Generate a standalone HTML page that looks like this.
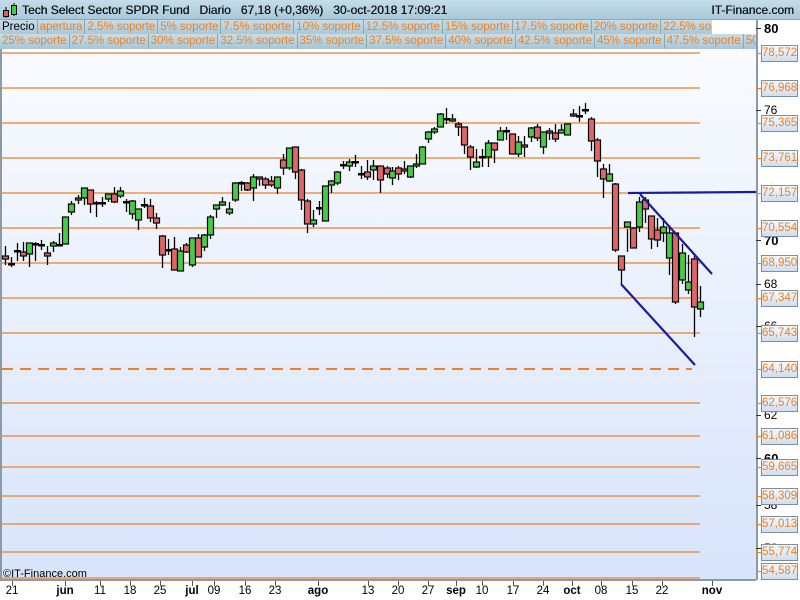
<!DOCTYPE html>
<html><head><meta charset="utf-8"><style>
*{margin:0;padding:0;box-sizing:border-box}
body{width:800px;height:600px;overflow:hidden;background:#fff;font-family:"Liberation Sans",sans-serif;position:relative}
#top{position:absolute;left:0;top:0;width:800px;height:20px;background:linear-gradient(#c4dde9,#a9cadb);border-bottom:1px solid #8aa;}
#top .t{position:absolute;left:22px;top:3px;font-size:12px;color:#111;text-shadow:0.3px 0 0 #111}
#top .r{position:absolute;right:6px;top:3px;font-size:12px;color:#111;text-shadow:0.3px 0 0 #111}
.row{position:absolute;left:0;height:15px;display:flex;white-space:nowrap;overflow:hidden}
.row span{display:block;height:15px;font-size:11.5px;line-height:14px;color:#f08020;padding:0 2px;border-right:1px solid #8aa;background:linear-gradient(#c8dde8,#a8c6d6)}
#axis{position:absolute;left:756px;top:20px;width:44px;height:560px;background:#fff;border-left:2px solid #8a9aa8}
.lb{position:absolute;left:761px;width:37px;height:17px;border:1px solid #7890a0;background:linear-gradient(#f4f8fc,#d0def0);color:#f08020;font-size:11.5px;line-height:15px;text-align:center}
.an{position:absolute;left:764px;font-size:12px;color:#000}
.xl{position:absolute;top:585px;font-size:11.5px;color:#000;transform:translateX(-50%)}
</style></head><body>
<div id="top"><svg style="position:absolute;left:2px;top:2px" width="16" height="16"><line x1="4" y1="5" x2="4" y2="16" stroke="#000"/><rect x="1.5" y="8.5" width="5" height="6" fill="#e06060" stroke="#000"/><line x1="12" y1="1" x2="12" y2="14" stroke="#000"/><rect x="9.5" y="3.5" width="5" height="9" fill="#40d040" stroke="#000"/></svg><div class="t">Tech Select Sector SPDR Fund&nbsp;&nbsp;&nbsp;Diario&nbsp;&nbsp;&nbsp;67,18 (+0,36%)&nbsp;&nbsp;&nbsp;30-oct-2018 17:09:21</div><div class="r">IT-Finance.com</div></div>
<div class="row" style="top:20px;width:712px"><span style="color:#000">Precio</span><span>apertura</span><span>2.5% soporte</span><span>5% soporte</span><span>7.5% soporte</span><span>10% soporte</span><span>12.5% soporte</span><span>15% soporte</span><span>17.5% soporte</span><span>20% soporte</span><span>22.5% soporte</span></div>
<div class="row" style="top:34px;width:756px"><span>25% soporte</span><span>27.5% soporte</span><span>30% soporte</span><span>32.5% soporte</span><span>35% soporte</span><span>37.5% soporte</span><span>40% soporte</span><span>42.5% soporte</span><span>45% soporte</span><span>47.5% soporte</span><span>50% soporte</span></div>
<svg id="ch" style="position:absolute;left:0;top:49px" width="756" height="532"></svg>
<div id="axis"></div>
<div id="al"></div>
<div style="position:absolute;left:0;top:581px;width:800px;height:19px;background:#fff"></div>
<div id="xl"></div>
<script>
var ch=document.getElementById('ch'),h='';
h+='<defs><linearGradient id="g" x1="0" y1="0" x2="0" y2="1"><stop offset="0" stop-color="#f9fbff"/><stop offset="1" stop-color="#d8e4fb"/></linearGradient></defs>';
h+='<rect x="0" y="0" width="756" height="532" fill="url(#g)"/>';
h+='<line x1="1" y1="0" x2="1" y2="532" stroke="#8a9aa8" stroke-width="2"/>';
h+='<line x1="0" y1="531" x2="756" y2="531" stroke="#8a9aa8" stroke-width="2"/>';
var lv=[53,88,123,158,193,228,263,298,333,403,436,467,496,524,552,578];
lv.forEach(function(y){h+='<line x1="2" y1="'+(y-49)+'" x2="700" y2="'+(y-49)+'" stroke="#f08020" stroke-width="1.3"/>';});
h+='<line x1="2" y1="320" x2="692" y2="320" stroke="#f08020" stroke-width="2" stroke-dasharray="11,7"/>';
var c=[[5,256,259,246,265],[11,264,265,257,267],[17,251,251,243,261],[23,252,256,242,261],[29,254,243,243,267],[35,244,244,242,261],[41,245,245,240,250],[47,253,256,246,265],[53,246,243,241,252],[59,245,245,233,245],[65,244,217,217,244],[71,212,204,201,215],[78,200,198,195,204],[84,198,188,188,205],[90,190,204,190,213],[96,203,203,201,217],[102,203,203,197,207],[108,199,194,194,202],[114,194,202,187,203],[120,196,191,187,198],[126,202,202,199,212],[132,214,201,200,219],[138,220,209,209,230],[144,205,205,198,208],[150,206,218,199,222],[156,218,223,213,229],[162,236,255,235,268],[168,250,250,239,255],[174,249,270,237,270],[180,271,251,247,271],[186,245,252,243,253],[192,265,238,238,267],[198,238,257,234,257],[204,247,235,234,251],[210,235,217,215,239],[216,209,205,205,218],[222,205,202,197,206],[229,213,209,202,215],[235,200,183,182,202],[241,183,183,181,191],[247,183,190,182,191],[253,188,177,174,201],[259,177,179,177,186],[265,179,185,177,189],[271,181,185,176,187],[277,188,177,177,194],[283,160,168,154,175],[289,168,148,148,170],[295,147,172,147,179],[301,170,200,169,210],[307,201,224,199,233],[313,224,220,210,227],[319,208,208,201,215],[325,221,186,186,221],[331,185,181,180,193],[337,183,172,171,185],[343,165,165,161,169],[349,166,162,159,171],[355,162,162,155,167],[361,174,174,166,179],[367,172,177,160,180],[373,170,166,160,180],[380,166,180,166,193],[387,168,174,166,178],[392,178,171,167,185],[398,168,174,166,180],[404,169,171,161,174],[410,177,166,166,178],[416,166,164,154,168],[422,164,147,146,164],[428,139,132,131,143],[434,132,129,127,134],[440,127,114,113,127],[446,119,119,108,124],[452,121,119,114,122],[458,124,127,122,136],[464,127,145,127,154],[470,147,157,145,170],[476,167,162,149,168],[482,157,157,149,167],[488,157,143,140,167],[494,143,150,143,163],[500,140,131,127,140],[506,131,131,127,140],[512,134,154,134,154],[518,154,142,136,157],[524,145,147,136,157],[531,137,128,127,142],[537,127,138,124,141],[543,147,132,132,154],[549,131,133,128,140],[555,133,139,124,142],[561,133,130,124,133],[567,135,124,124,135],[573,114,116,109,117],[579,116,116,106,122],[585,110,110,103,114],[591,119,141,117,151],[597,140,161,138,177],[603,169,179,164,198],[609,181,174,164,182],[615,184,250,183,252],[621,256,270,256,284],[627,227,222,229,252],[633,228,248,227,248],[639,227,202,197,232],[645,200,209,197,223],[651,216,239,216,249],[657,230,240,218,247],[663,233,227,218,242],[669,258,233,228,275],[675,233,302,233,304],[682,280,253,244,284],[688,290,282,255,294],[694,259,307,255,337],[700,309,302,286,317]];
c.forEach(function(d){var x=d[0],o=d[1]-49,cl=d[2]-49,hi=d[3]-49,lo=d[4]-49;
h+='<line x1="'+(x+.5)+'" y1="'+hi+'" x2="'+(x+.5)+'" y2="'+lo+'" stroke="#000" stroke-width="1.3"/>';
var t=Math.min(o,cl),b=Math.max(o,cl);
if(b-t<1.5){h+='<rect x="'+(x-3)+'" y="'+(t-1)+'" width="7" height="2.5" fill="#000"/>';}
else h+='<rect x="'+(x-2.5)+'" y="'+t+'" width="6" height="'+(b-t)+'" fill="'+(cl<o?'#44cc44':'#e06666')+'" stroke="#000" stroke-width="1.2"/>';});
h+='<line x1="628" y1="144" x2="756" y2="143" stroke="#1a1aa0" stroke-width="2.2"/>';
h+='<line x1="640" y1="145" x2="712" y2="225" stroke="#1a1aa0" stroke-width="2.2"/>';
h+='<line x1="621" y1="235" x2="695" y2="316" stroke="#1a1aa0" stroke-width="2.2"/>';
ch.innerHTML=h;
var al='',labs=[['78,572',53],['76,968',88],['75,365',123],['73,761',158],['72,157',193],['70,554',228],['68,950',263],['67,347',298],['65,743',333],['64,140',369],['62,576',403],['61,086',436],['59,665',467],['58,309',496],['57,013',524],['55,774',552],['54,587',571]];
var ns=[['80',28,1],['76',110,0],['74',158,0],['70',240,1],['68',284,0],['66',326,0],['62',415,0],['60',458,1],['58',505,0],['56',548,0]];
ns.forEach(function(n){al+='<div class="an" style="top:'+(n[1]-7)+'px;'+(n[2]?'font-weight:bold;font-size:13px':'')+'">'+n[0]+'</div><div style="position:absolute;left:756px;top:'+n[1]+'px;width:5px;height:1px;background:#333"></div>';});
labs.forEach(function(l){al+='<div style="position:absolute;left:756px;top:'+l[1]+'px;width:6px;height:1px;background:#f08020"></div><div class="lb" style="top:'+(l[1]-8)+'px">'+l[0]+'</div>';});
al+='<div style="position:absolute;left:3px;top:568px;font-size:11px;color:#000">©IT-Finance.com</div>';
document.getElementById('al').innerHTML=al;
var xs=[['21',12],['jun',65,1],['11',100],['18',130],['25',160],['jul',192,1],['09',214],['16',245],['23',275],['ago',318,1],['13',368],['20',398],['27',428],['sep',456,1],['10',482],['17',513],['24',543],['oct',572,1],['08',601],['15',632],['22',662],['nov',712,1]],xh='';
xs.forEach(function(a){xh+='<div class="xl" style="left:'+a[1]+'px;'+(a[2]?'font-weight:bold':'')+'">'+a[0]+'</div><div style="position:absolute;left:'+a[1]+'px;top:581px;width:1px;height:5px;background:#555"></div>';});
document.getElementById('xl').innerHTML=xh;
</script>
</body></html>
